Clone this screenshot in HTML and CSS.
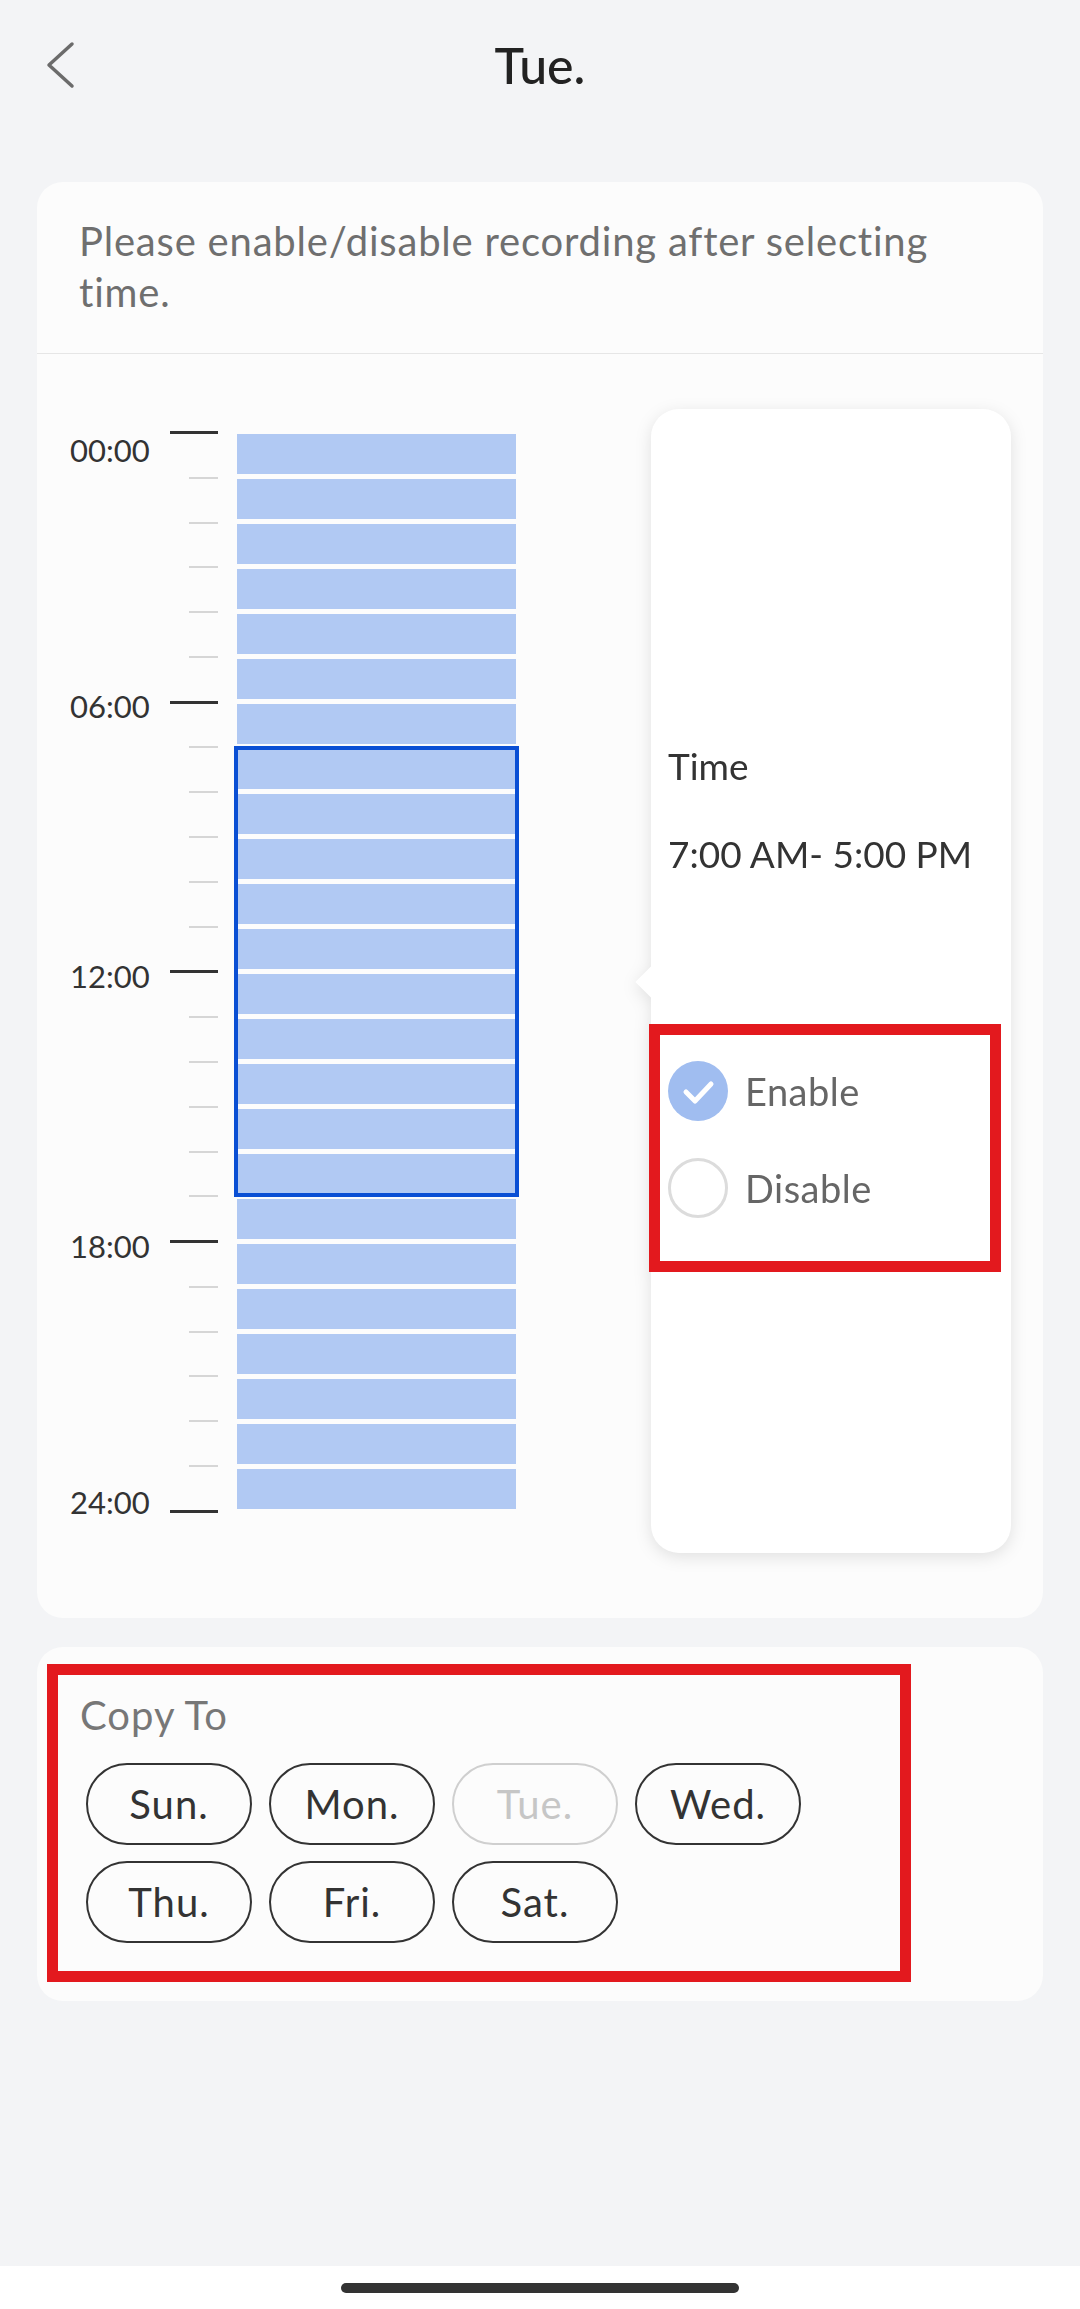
FILE: index.html
```html
<!DOCTYPE html>
<html lang="en">
<head>
<meta charset="utf-8">
<title>Tue.</title>
<link rel="stylesheet" href="styles.css">
</head>
<body>
<div class="screen">
  <div class="content">
    <header class="topbar">
      <div class="nav-left">
        <svg class="back" width="30" height="48" viewBox="0 0 30 48" aria-hidden="true">
          <polyline points="26,3 3,24 26,45" fill="none" stroke="#6b6b6b" stroke-width="3.5" stroke-linecap="round" stroke-linejoin="round"/>
        </svg>
      </div>
      <h1 class="title">Tue.</h1>
      <div class="nav-right"></div>
    </header>

    <section class="card schedule">
      <div class="hint-wrap">
        <p class="hint">Please enable/disable recording after selecting time.</p>
      </div>
      <div class="timeline-body">
        <div class="labels">
          <span class="lbl">00:00</span>
          <span class="lbl lbl-edge">06:00</span>
          <span class="lbl lbl-mid">12:00</span>
          <span class="lbl lbl-mid">18:00</span>
          <span class="lbl lbl-edge">24:00</span>
        </div>
        <div class="ticks">
          <i class="tick major"></i><i class="tick"></i><i class="tick"></i><i class="tick"></i><i class="tick"></i><i class="tick"></i>
          <i class="tick major"></i><i class="tick"></i><i class="tick"></i><i class="tick"></i><i class="tick"></i><i class="tick"></i>
          <i class="tick major"></i><i class="tick"></i><i class="tick"></i><i class="tick"></i><i class="tick"></i><i class="tick"></i>
          <i class="tick major"></i><i class="tick"></i><i class="tick"></i><i class="tick"></i><i class="tick"></i><i class="tick"></i>
          <i class="tick major"></i>
        </div>
        <div class="bars">
          <div class="bar"></div><div class="bar"></div><div class="bar"></div><div class="bar"></div>
          <div class="bar"></div><div class="bar"></div><div class="bar"></div><div class="bar"></div>
          <div class="bar"></div><div class="bar"></div><div class="bar"></div><div class="bar"></div>
          <div class="bar"></div><div class="bar"></div><div class="bar"></div><div class="bar"></div>
          <div class="bar"></div><div class="bar"></div><div class="bar"></div><div class="bar"></div>
          <div class="bar"></div><div class="bar"></div><div class="bar"></div><div class="bar"></div>
          <div class="selection"></div>
        </div>
        <div class="popup">
          <span class="popup-arrow"></span>
          <div class="popup-inner">
            <div class="p-label">Time</div>
            <div class="p-range">7:00 AM- 5:00 PM</div>
            <div class="options">
              <div class="option">
                <span class="radio checked">
                  <svg width="60" height="60" viewBox="0 0 60 60" aria-hidden="true">
                    <polyline points="18,31 27,40 43,23" fill="none" stroke="#ffffff" stroke-width="5" stroke-linecap="round" stroke-linejoin="round"/>
                  </svg>
                </span>
                <span class="opt-text">Enable</span>
              </div>
              <div class="option">
                <span class="radio"></span>
                <span class="opt-text">Disable</span>
              </div>
            </div>
          </div>
          <div class="highlight popup-highlight"></div>
        </div>
      </div>
    </section>

    <section class="card copy">
      <div class="copy-title">Copy To</div>
      <div class="pills">
        <span class="pill">Sun.</span>
        <span class="pill">Mon.</span>
        <span class="pill off">Tue.</span>
        <span class="pill">Wed.</span>
        <span class="pill">Thu.</span>
        <span class="pill">Fri.</span>
        <span class="pill">Sat.</span>
      </div>
      <div class="highlight copy-highlight"></div>
    </section>
  </div>
  <div class="homebar"><span class="indicator"></span></div>
</div>
</body>
</html>
```
FILE: styles.css
```css
* { box-sizing: border-box; }

html, body {
  margin: 0;
  padding: 0;
  background: #f3f4f6;
  font-family: "Lato", "Noto Sans", "DejaVu Sans", sans-serif;
}

.screen {
  width: 1080px;
  height: 2309px;
  display: flex;
  flex-direction: column;
}

.content {
  height: 2266px;
  background: #f3f4f6;
  padding: 0 37px;
}

/* Header */
.topbar {
  height: 130px;
  display: grid;
  grid-template-columns: 1fr auto 1fr;
  align-items: center;
  margin: 0 -37px;
}
.nav-left {
  padding-left: 46px;
  display: flex;
  align-items: center;
}
.back { display: block; }
.title {
  margin: 0;
  font-size: 50px;
  line-height: 130px;
  font-weight: 500;
  color: #222;
}

/* Cards */
.card {
  background: #fcfcfc;
  border-radius: 26px;
  position: relative;
}
.schedule { margin-top: 52px; }

.hint-wrap {
  padding: 34px 42px 35px 42px;
  border-bottom: 1px solid #e6e6e6;
}
.hint {
  margin: 0;
  max-width: 900px;
  font-size: 40px;
  line-height: 51px;
  letter-spacing: 0.8px;
  color: #6f6f6f;
}

.timeline-body {
  display: flex;
  align-items: flex-start;
  padding: 55px 32px 65px 33px;
}

.labels {
  width: 100px;
  margin-top: 23px;
  display: flex;
  flex-direction: column;
}
.lbl {
  font-size: 31px;
  line-height: 36px;
  color: #333;
}
.lbl-edge { margin-top: 220px; }
.lbl-mid { margin-top: 234px; }

.ticks {
  width: 48px;
  margin-top: 22px;
  height: 1082px;
  display: flex;
  flex-direction: column;
  justify-content: space-between;
  align-items: flex-end;
}
.tick {
  display: block;
  width: 29px;
  height: 2px;
  background: #d6d6d6;
}
.tick.major {
  width: 48px;
  height: 3px;
  background: #333;
}

.bars {
  position: relative;
  width: 279px;
  margin-left: 19px;
  margin-top: 25px;
  display: flex;
  flex-direction: column;
  gap: 5px;
}
.bar {
  height: 40px;
  background: #b1c9f3;
}
.selection {
  position: absolute;
  left: -3px;
  top: 312px;
  width: 285px;
  height: 451px;
  border: 4px solid #0a4fd4;
}

/* Popup */
.popup {
  position: relative;
  margin-left: auto;
  width: 360px;
  height: 1144px;
  background: #fff;
  border-radius: 28px;
  filter: drop-shadow(0 4px 8px rgba(0, 0, 0, 0.11));
}
.popup-arrow {
  position: absolute;
  left: -11px;
  top: 562px;
  width: 22px;
  height: 22px;
  background: #fff;
  transform: rotate(45deg);
}
.popup-inner {
  position: relative;
  height: 100%;
  display: flex;
  flex-direction: column;
  justify-content: center;
  padding-left: 17px;
}
.p-label, .p-range {
  font-size: 37px;
  line-height: 44px;
  color: #333;
}
.p-range { margin-top: 44px; }

.options { margin-top: 185px; }
.option {
  height: 60px;
  display: flex;
  align-items: center;
  gap: 17px;
}
.option + .option { margin-top: 37px; }
.radio {
  width: 60px;
  height: 60px;
  border-radius: 50%;
  border: 3px solid #dcdcdc;
  flex: none;
}
.radio.checked {
  border: none;
  background: #a0bdf0;
}
.radio svg { display: block; }
.opt-text {
  font-size: 38px;
  line-height: 46px;
  letter-spacing: 0.5px;
  color: #666;
}

/* Red annotation boxes */
.highlight {
  position: absolute;
  border: 11px solid #e3191e;
  pointer-events: none;
}
.popup-highlight {
  left: -2px;
  top: 615px;
  width: 352px;
  height: 248px;
}
.copy-highlight {
  left: 10px;
  top: 17px;
  width: 864px;
  height: 318px;
}

/* Copy To card */
.copy {
  margin-top: 29px;
  padding: 46px 43px 58px 43px;
}
.copy-title {
  font-size: 40px;
  line-height: 44px;
  letter-spacing: 1px;
  color: #777;
}
.pills {
  margin-top: 26px;
  margin-left: 6px;
  width: 715px;
  display: flex;
  flex-wrap: wrap;
  gap: 16px 17px;
}
.pill {
  width: 166px;
  height: 82px;
  border: 2px solid #333;
  border-radius: 41px;
  display: flex;
  align-items: center;
  justify-content: center;
  font-size: 40px;
  letter-spacing: 1px;
  color: #333;
}
.pill.off {
  border-color: #cfcfcf;
  color: #c6c6c6;
}

/* Home indicator */
.homebar {
  height: 43px;
  background: #fff;
  display: flex;
  justify-content: center;
  padding-top: 17px;
}
.indicator {
  width: 398px;
  height: 10px;
  border-radius: 5px;
  background: #333;
}
```
